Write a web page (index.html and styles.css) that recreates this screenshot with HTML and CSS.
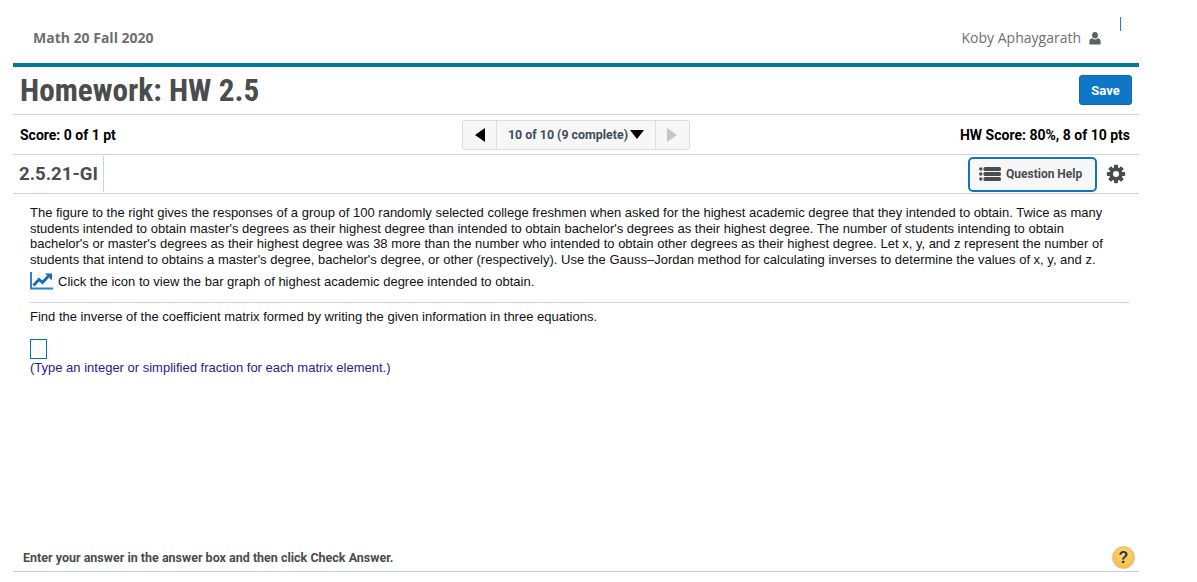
FILE: index.html
```html
<!DOCTYPE html>
<html lang="en">
<head>
<meta charset="utf-8">
<title>Homework: HW 2.5</title>
<link rel="stylesheet" href="styles.css">
</head>
<body>
<div class="page">
  <header class="top">
    <span class="course">Math 20 Fall 2020</span>
    <span class="user">Koby Aphaygarath
      <svg class="user-icon" viewBox="0 0 12 13" width="12" height="13"><ellipse cx="6" cy="3.2" rx="2.9" ry="3.2" fill="#5f6264"/><path d="M0.4 12.6V9.2C0.4 7.4 1.6 6.4 3.2 6.2C4 7 5 7.4 6 7.4C7 7.4 8 7 8.8 6.2C10.4 6.4 11.6 7.4 11.6 9.2V12.6Z" fill="#5f6264"/></svg>
    </span>
    <span class="caret"></span>
  </header>
  <main class="panel">
    <div class="title-row">
      <h1 class="title">Homework: HW 2.5</h1>
      <button class="save">Save</button>
    </div>
    <div class="score-row">
      <span class="score">Score: 0 of 1 pt</span>
      <nav class="pager">
        <span class="pager-btn pager-prev"><svg viewBox="0 0 10 14" width="10" height="14"><path d="M10 0V14L0 7Z" fill="#000"/></svg></span>
        <span class="pager-mid">10 of 10 (9 complete)<svg viewBox="0 0 14 9" width="14" height="9"><path d="M0 0H14L7 9Z" fill="#000"/></svg></span>
        <span class="pager-btn pager-next"><svg viewBox="0 0 10 14" width="10" height="14"><path d="M0 0V14L10 7Z" fill="#c4c4c4"/></svg></span>
      </nav>
      <span class="score hw">HW Score: 80%, 8 of 10 pts</span>
    </div>
    <div class="q-row">
      <span class="q-id">2.5.21-GI</span>
      <div class="q-tools">
        <button class="help">
          <svg viewBox="0 0 22 14" width="22" height="14"><g fill="#4a4c4e"><circle cx="1.8" cy="2" r="1.7"/><circle cx="1.8" cy="7" r="1.7"/><circle cx="1.8" cy="12" r="1.7"/><rect x="4.5" y="0" width="17.5" height="4" rx="1.6"/><rect x="4.5" y="5" width="17.5" height="4" rx="1.6"/><rect x="4.5" y="10" width="17.5" height="4" rx="1.6"/></g></svg>
          Question Help
        </button>
        <svg class="gear" viewBox="0 0 24 24" width="20" height="20">
          <g fill="#4a4c4e">
            <rect x="9.5" y="1" width="5" height="22" rx="1"/>
            <rect x="9.5" y="1" width="5" height="22" rx="1" transform="rotate(45 12 12)"/>
            <rect x="9.5" y="1" width="5" height="22" rx="1" transform="rotate(90 12 12)"/>
            <rect x="9.5" y="1" width="5" height="22" rx="1" transform="rotate(135 12 12)"/>
          </g>
          <circle cx="12" cy="12" r="6" fill="none" stroke="#4a4c4e" stroke-width="4"/>
          <circle cx="12" cy="12" r="3.6" fill="#fff"/>
        </svg>
      </div>
    </div>
    <section class="question">
      <p class="stem">The figure to the right gives the responses of a group of 100 randomly selected college freshmen when asked for the highest academic degree that they intended to obtain. Twice as many students intended to obtain master's degrees as their highest degree than intended to obtain bachelor's degrees as their highest degree. The number of students intending to obtain bachelor's or master's degrees as their highest degree was 38 more than the number who intended to obtain other degrees as their highest degree. Let x, y, and z represent the number of students that intend to obtains a master's degree, bachelor's degree, or other (respectively). Use the Gauss–Jordan method for calculating inverses to determine the values of x, y, and z.</p>
      <p class="graph-link">
        <svg viewBox="0 0 23 18" width="23" height="18"><path d="M1 0V16.5H23" fill="none" stroke="#2f7fd0" stroke-width="2"/><path d="M3.5 13.5L9 7.5L12.5 10.5L18 4.5" fill="none" stroke="#1668b8" stroke-width="2.8"/><path d="M15 1.5H22V8.5Z" fill="#1668b8"/></svg>
        Click the icon to view the bar graph of highest academic degree intended to obtain.
      </p>
      <div class="part">
        <p class="find">Find the inverse of the coefficient matrix formed by writing the given information in three equations.</p>
        <div class="answer-box"></div>
        <p class="hint">(Type an integer or simplified fraction for each matrix element.)</p>
      </div>
    </section>
    <footer class="foot">
      <span class="foot-text">Enter your answer in the answer box and then click Check Answer.</span>
      <span class="qmark">?</span>
    </footer>
  </main>
</div>
</body>
</html>
```
FILE: styles.css
```css
* { box-sizing: border-box; }
html, body { margin: 0; padding: 0; background: #fff; }
body { font-family: "Liberation Sans", Arial, sans-serif; height: 582px; overflow: hidden; }
.page { width: 1139px; padding-left: 13px; }
p { margin: 0; }
.top { height: 63px; display: flex; align-items: flex-start; padding: 29px 0 0 20px; position: relative; }
.course { font: 700 14px/18px "Open Sans", sans-serif; color: #6d6f71; }
.user { margin-left: auto; margin-right: 38px; font: 400 14px/18px "Open Sans", sans-serif; color: #6d6f71; display: flex; align-items: center; gap: 8px; }
.caret { position: absolute; left: 1107px; top: 17px; width: 1px; height: 14px; background: #2f7fb8; }
.panel { border-top: 4px solid #007a9a; height: 509px; display: flex; flex-direction: column; }
.title-row { height: 48px; border-bottom: 1px solid #cdd2e0; display: flex; align-items: center; justify-content: space-between; padding: 0 7px 0 7px; }
.title { margin: 0; font: 700 31.2px/36px "Liberation Sans Narrow", "Roboto Condensed", Roboto, sans-serif; color: #4a4c4e; }
.save { width: 53px; height: 30px; margin-bottom: 1px; background: #0f76c8; color: #fff; border: 1px solid #0d68b0; border-radius: 3px; font: 700 13px "Liberation Sans Narrow", Roboto, sans-serif; padding: 0; }
.score-row { height: 40px; border-bottom: 1px solid #cdd2e0; display: grid; grid-template-columns: 1fr auto 1fr; align-items: center; padding: 0 7px; }
.score { font: 700 14px/18px "Liberation Sans Narrow", Roboto, sans-serif; color: #000; }
.hw { justify-self: end; margin-right: 2px; }
.pager { display: flex; height: 30px; border: 1px solid #dcdcdc; border-radius: 3px; background: #f7f7f7; }
.pager-btn { width: 34px; display: flex; align-items: center; justify-content: center; }
.pager-prev { border-right: 1px solid #dcdcdc; }
.pager-next { border-left: 1px solid #dcdcdc; }
.pager-mid { display: flex; align-items: center; gap: 2px; padding: 0 11px; font: 700 12.4px "Liberation Sans Narrow", Roboto, sans-serif; color: #3f4a5a; }
.q-row { height: 39px; border-bottom: 1px solid #cdd2e0; display: flex; align-items: center; justify-content: space-between; padding-left: 6px; }
.q-id { font: 700 18.6px/36px "Liberation Sans Narrow", Roboto, sans-serif; color: #4a4c4e; width: 85px; border-right: 1px solid #cdd2e0; height: 36px; }
.q-tools { display: flex; align-items: center; gap: 9px; padding-right: 13px; }
.help { width: 129px; height: 35px; display: flex; align-items: center; gap: 5px; padding: 0 0 0 9px; background: #f7f7f7; border: 2px solid #1473bf; border-radius: 5px; font: 700 12px "Liberation Sans Narrow", Roboto, sans-serif; color: #4a4c4e; }
.question { flex: 1; padding: 11px 0 0 17px; font-size: 13px; line-height: 15.6px; color: #111; }
.stem { width: 1078px; }
.graph-link { display: flex; align-items: center; gap: 5px; margin-top: 5px; height: 18px; }
.part { margin-top: 11.6px; margin-right: 10px; margin-left: -1px; padding: 6px 0 0 1px; border-top: 1px solid #cdd2e0; }
.answer-box { width: 17px; height: 20px; margin-top: 14px; border: 1px solid #007a9a; }
.hint { color: #2a2090; margin-top: 1px; }
.foot { height: 28px; border-bottom: 1px solid #c8ccd4; display: flex; align-items: center; justify-content: space-between; padding: 0 4px 0 10px; }
.foot-text { font: 700 12.5px "Liberation Sans Narrow", Roboto, sans-serif; color: #4a4c4e; }
.qmark { width: 23px; height: 23px; border-radius: 50%; background: radial-gradient(circle at 50% 35%, #ffd777, #f5b63c); border: 1px solid #e0c080; display: flex; align-items: center; justify-content: center; font: 700 16px "Liberation Sans", sans-serif; color: #333; }
```
